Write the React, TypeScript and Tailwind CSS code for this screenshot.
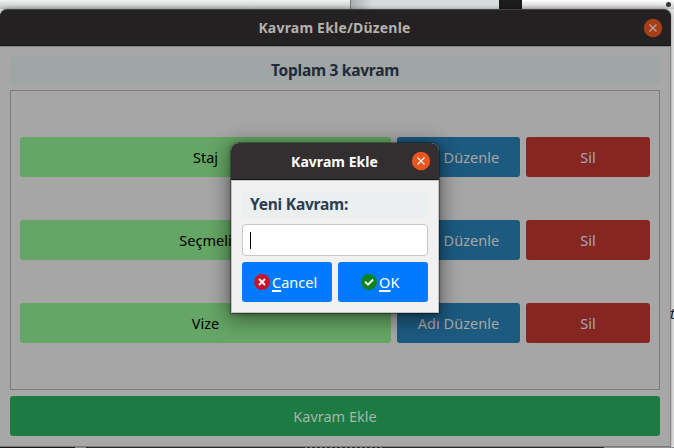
import React from 'react';

const concepts = ['Staj', 'Seçmeli', 'Vize'];

function CloseButton({ dim = false }: { dim?: boolean }) {
  return (
    <svg width="20" height="20" viewBox="0 0 20 20" className="shrink-0">
      <circle cx="10" cy="10" r="9.2" fill={dim ? '#a83e18' : '#e95420'} />
      <path d="M6.5 6.5 13.5 13.5M13.5 6.5 6.5 13.5" stroke={dim ? '#b5aaa6' : '#fff'} strokeWidth="1.2" fill="none" />
    </svg>
  );
}

function ConceptRow({ name }: { name: string }) {
  return (
    <div className="flex h-10 gap-1.5">
      <div className="flex w-[371px] items-center justify-center rounded-[3px] bg-[#65a565] text-black">
        <span>{name}</span>
      </div>
      <div className="flex w-[123px] items-center justify-center rounded-[3px] bg-[#1c5a80] text-[#a7a7a7]">
        <span className="tracking-[0.02px]">Adı Düzenle</span>
      </div>
      <div className="flex w-[124px] items-center justify-center rounded-[3px] bg-[#852720] text-[#a7a7a7]">
        <span>Sil</span>
      </div>
    </div>
  );
}

function Dialog() {
  return (
    <div className="absolute left-[231px] top-[143px] h-[170px] w-[208px] rounded-t-[8px] bg-[#f1f1f1] shadow-[0_4px_20px_3px_rgba(0,0,0,0.42),0_1px_5px_rgba(0,0,0,0.3),0_0_0_1px_rgba(0,0,0,0.28)]">
      <div className="flex h-[37px] items-center rounded-t-[8px] border-b border-[#191919] bg-[#332f30] pl-[27px] pr-2 text-white">
        <span className="flex-1 pt-px text-center text-[14px] font-bold leading-5 tracking-[0.05px]">Kavram Ekle</span>
        <CloseButton />
      </div>
      <div className="flex h-[133px] flex-col border border-[#c2c2c2] px-2.5 pt-[10px]">
        <div className="flex h-[27px] items-center rounded-[4px] bg-[#ebeff0] pb-0.5 pl-2 text-[15.5px] font-bold text-[#2c3e50]">
          <span className="tracking-[-0.22px]">Yeni Kavram:</span>
        </div>
        <div className="mt-1.5 flex h-8 items-center rounded-[4px] border border-[#c8c8c8] bg-white pl-[7px]">
          <span className="h-[17px] w-px bg-black" />
        </div>
        <div className="mt-1.5 flex h-10 gap-1.5 text-white">
          <div className="flex w-[90px] items-center rounded-[3px] bg-[#007bff] pl-3">
            <svg width="16" height="16" viewBox="0 0 16 16">
              <circle cx="8" cy="8" r="8" fill="#c7162b" />
              <path d="m5 5 6 6m0-6-6 6" stroke="#fff" strokeWidth="1.8" />
            </svg>
            <span className="ml-[2px]">
              <span className="underline decoration-2 underline-offset-2">C</span>ancel
            </span>
          </div>
          <div className="flex w-[90px] items-center rounded-[3px] bg-[#007bff] pl-[23px]">
            <svg width="16" height="16" viewBox="0 0 16 16">
              <circle cx="8" cy="8" r="8" fill="#0e8420" />
              <path d="m4 7.7 3 3L12.2 5.5" fill="none" stroke="#fff" strokeWidth="1.8" />
            </svg>
            <span className="ml-[2px] tracking-[0.2px]">
              <span className="underline decoration-2 underline-offset-2">O</span>K
            </span>
          </div>
        </div>
      </div>
    </div>
  );
}

export default function App() {
  return (
    <div className="relative flex h-[448px] w-[674px] flex-col overflow-hidden bg-[#e8e8e8] font-['Noto_Sans','Open_Sans',sans-serif] text-[14.5px] leading-5">
      <div className="flex h-[9px] bg-linear-to-b from-[#f2f4f4] to-[#bfc1c1]">
        <div className="w-[351px] border-r border-[#777]" />
        <div className="w-[148px] bg-linear-to-r from-[#a9b0b1] via-[#d5dddd] via-15% to-[#d5dddd]" />
        <div className="w-[23px] bg-[#1c1c1c]" />
        <div className="flex-1 bg-linear-to-b from-white to-[#c8c8c8]" />
      </div>
      <span className="absolute left-[666px] top-[2px] h-[5px] w-[5px] rounded-full bg-[#333]" />
      <div className="h-[438px] w-[671px] rounded-t-[7px] border-b border-[#7b7b7b] bg-[#a7a7a7] shadow-[0_0_4px_rgba(0,0,0,0.4)]">
        <div className="flex h-[37px] items-center rounded-t-[7px] border-b border-t border-b-[#151314] border-t-[#454344] bg-[#242122] pl-[26px] pr-2 text-[#b4b1af]">
          <span className="flex-1 text-center text-[14px] font-bold tracking-[0.2px]">Kavram Ekle/Düzenle</span>
          <CloseButton dim />
        </div>
        <div className="flex h-[400px] flex-col border-r border-t border-[#858585] pl-2.5 pr-2.5 pt-2.5">
          <div className="flex h-[27px] items-center justify-center rounded-[4px] bg-[#a0a5a5] pb-0.5 text-[15.5px] font-bold text-[#1f2b38]">
            <span className="tracking-[-0.27px]">Toplam 3 kavram</span>
          </div>
          <div className="mt-1.5 flex h-[300px] flex-col gap-[43px] border border-[#7c7c7c] bg-[#a6a6a6] pl-[9px] pt-[46px]">
            {concepts.map((name) => <ConceptRow key={name} name={name} />)}
          </div>
          <div className="mt-1.5 flex h-10 items-center justify-center rounded-[3px] bg-[#1c7a43] text-[#a7b5ac]">
            <span>Kavram Ekle</span>
          </div>
        </div>
      </div>
      <div className="flex h-px">
        <span className="w-[75px] bg-[#151515]" />
        <span className="w-[11px] bg-[#858585]" />
        <span className="w-[219px] bg-[#202830]" />
        <span className="w-[80px] bg-[repeating-linear-gradient(90deg,#777_0px,#777_2px,#202830_2px,#202830_5px)]" />
        <span className="w-[219px] bg-[#202830]" />
        <span className="flex-1 bg-[#909090]" />
      </div>
      <span className="absolute left-[670px] top-[303px] w-1 overflow-hidden text-[15px] italic text-[#222]">t</span>
      <Dialog />
    </div>
  );
}
